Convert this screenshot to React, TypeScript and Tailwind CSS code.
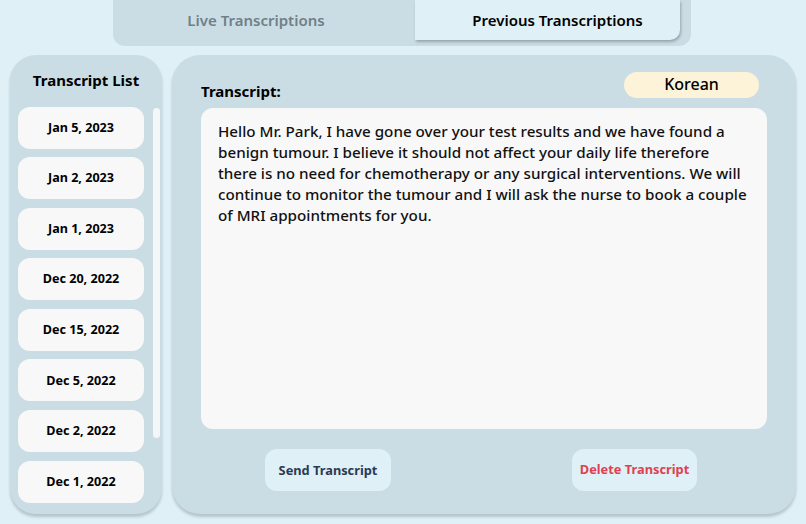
import React from 'react';

const DATES = [
  'Jan 5, 2023',
  'Jan 2, 2023',
  'Jan 1, 2023',
  'Dec 20, 2022',
  'Dec 15, 2022',
  'Dec 5, 2022',
  'Dec 2, 2022',
  'Dec 1, 2022',
];

const TEXT =
  'Hello Mr. Park, I have gone over your test results and we have found a benign tumour. I believe it should not affect your daily life therefore there is no need for chemotherapy or any surgical interventions. We will continue to monitor the tumour and I will ask the nurse to book a couple of MRI appointments for you.';

const App = () => {
  return (
    <div
      className="flex h-[524px] w-[806px] flex-col overflow-hidden bg-[#dff0f7] text-black"
      style={{ fontFamily: '"Noto Sans", "Open Sans", sans-serif' }}
    >
      {/* tabs */}
      <div className="ml-[113px] flex h-[46px] w-[578px] rounded-b-[12px] bg-[#cbdde4] pr-[11px]">
        <div className="flex h-[40px] w-[302px] items-center justify-center pr-[16px] text-[15px] font-semibold text-[#6f8089]">
          Live Transcriptions
        </div>
        <div className="flex h-[40px] flex-1 items-center justify-center rounded-br-[10px] bg-[#dff0f7] pl-[20px] text-[15px] font-semibold shadow-[1px_2px_3px_rgba(0,0,0,0.25)]">
          Previous Transcriptions
        </div>
      </div>

      <div className="mt-[9px] flex gap-[10px] pl-[10px]">
        {/* transcript list */}
        <div className="flex h-[459px] w-[152px] flex-col rounded-[26px] bg-[#cbdde4] shadow-[0_3px_3px_rgba(0,0,0,0.18)]">
          <div className="pt-[14px] text-center text-[15px] font-bold">Transcript List</div>
          <div className="mt-[15px] flex">
            <div className="ml-[8px] flex w-[126px] flex-col gap-[8.6px]">
              {DATES.map((d) => (
                <div
                  key={d}
                  className="flex h-[42px] items-center justify-center rounded-[12px] bg-[#f8f8f8] pt-[1px] text-[12.6px] font-bold"
                >
                  {d}
                </div>
              ))}
            </div>
            <div className="ml-[9px] mt-[1px] h-[330px] w-[7px] rounded-full bg-[#f4f7f8]" />
          </div>
        </div>

        {/* transcript view */}
        <div className="flex h-[459px] w-[624px] flex-col rounded-[28px] bg-[#cbdde4] px-[29px] shadow-[0_3px_3px_rgba(0,0,0,0.18)]">
          <div className="flex h-[53px] items-end justify-between">
            <div className="pb-[6px] text-[15px] font-bold">Transcript:</div>
            <div className="mb-[10px] mr-[8px] flex h-[26px] w-[135px] items-center justify-center rounded-full bg-[#fdf3d8] pb-[2px] text-[16px] font-medium">
              Korean
            </div>
          </div>
          <div className="h-[321px] rounded-[12px] bg-[#f8f8f8] px-[17px] pt-[13px] text-[15.2px] font-medium leading-[21px] text-[#111]">
            {TEXT}
          </div>
          <div className="flex flex-1 items-start justify-between pl-[64px] pr-[70px] pt-[20px]">
            <button className="flex h-[42px] w-[126px] items-center justify-center rounded-[12px] bg-[#dff0f7] pt-[1px] text-[12.8px] font-bold text-[#2b3a55]">
              Send Transcript
            </button>
            <button className="flex h-[42px] w-[125px] items-center justify-center rounded-[12px] bg-[#dff0f7] text-[12.8px] font-bold text-[#e0404f]">
              Delete Transcript
            </button>
          </div>
        </div>
      </div>
    </div>
  );
};

export default App;
